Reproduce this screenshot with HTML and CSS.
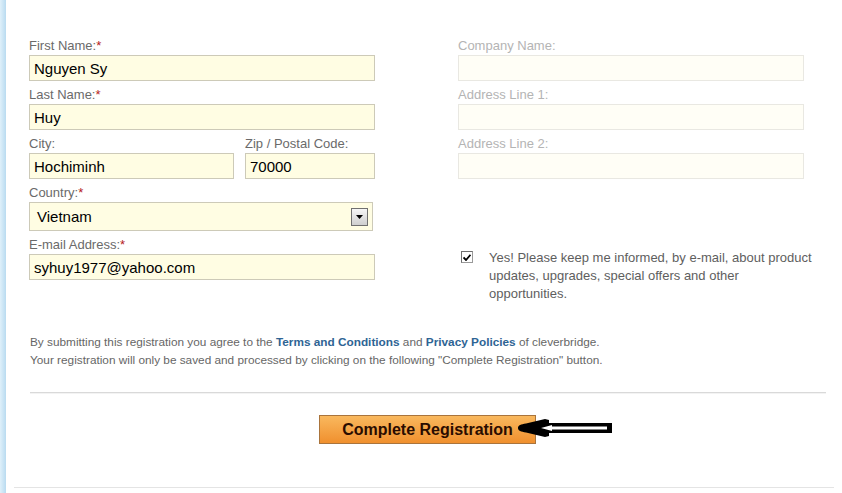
FILE: index.html
```
<!DOCTYPE html>
<html>
<head>
<meta charset="utf-8">
<link rel="stylesheet" href="styles.css">
</head>
<body>
<div class="page">
  <div class="strip"></div>
  <main class="content">
    <div class="form-grid">
      <div class="col">
        <div class="field">
          <label class="lbl">First Name:<span class="req">*</span></label>
          <input class="inp" type="text" value="Nguyen Sy">
        </div>
        <div class="field">
          <label class="lbl">Last Name:<span class="req">*</span></label>
          <input class="inp" type="text" value="Huy">
        </div>
        <div class="row2">
          <div class="field city">
            <label class="lbl">City:</label>
            <input class="inp" type="text" value="Hochiminh">
          </div>
          <div class="field zip">
            <label class="lbl">Zip / Postal Code:</label>
            <input class="inp" type="text" value="70000">
          </div>
        </div>
        <div class="field">
          <label class="lbl">Country:<span class="req">*</span></label>
          <div class="sel">
            <span class="sel-val">Vietnam</span>
            <span class="sel-btn"><svg width="7" height="4" viewBox="0 0 7 4"><path d="M0 0H7L3.5 4Z" fill="#000"/></svg></span>
          </div>
        </div>
        <div class="field">
          <label class="lbl">E-mail Address:<span class="req">*</span></label>
          <input class="inp" type="text" value="syhuy1977@yahoo.com">
        </div>
      </div>
      <div class="col col-opt">
        <div class="field">
          <label class="lbl">Company Name:</label>
          <input class="inp" type="text" value="">
        </div>
        <div class="field">
          <label class="lbl">Address Line 1:</label>
          <input class="inp" type="text" value="">
        </div>
        <div class="field">
          <label class="lbl">Address Line 2:</label>
          <input class="inp" type="text" value="">
        </div>
        <div class="newsletter">
          <span class="chk"><svg width="8" height="7" viewBox="0 0 8 7"><path d="M0.5 3.5L3 6L7.5 0.8" fill="none" stroke="#000" stroke-width="1.8"/></svg></span>
          <p class="news-text">Yes! Please keep me informed, by e-mail, about product updates, upgrades, special offers and other opportunities.</p>
        </div>
      </div>
    </div>
    <p class="terms">By submitting this registration you agree to the <a class="lnk">Terms and Conditions</a> and <a class="lnk">Privacy Policies</a> of cleverbridge.<br>Your registration will only be saved and processed by clicking on the following "Complete Registration" button.</p>
    <div class="sep"></div>
    <div class="actions">
      <div class="btn-wrap">
        <button class="btn" type="button">Complete Registration</button>
        <svg class="arrow" width="96" height="20" viewBox="0 0 96 20">
          <path d="M1 10C1 7 4 6.5 9 5.5L28 1L32 2L32 5L95 5L95 15L32 15L32 18L28 19L9 14.5C4 13.5 1 13 1 10Z" fill="#000"/>
          <path d="M24 10L35 7L35 8.5L90 8.5L90 11.5L35 11.5L35 13Z" fill="#fff"/>
        </svg>
      </div>
    </div>
    <div class="bottom-line"></div>
  </main>
</div>
</body>
</html>
```
FILE: styles.css
```
html, body {
  margin: 0;
  padding: 0;
  background: #fff;
  overflow: hidden;
}
body {
  font-family: "Liberation Sans", Arial, sans-serif;
}
.page {
  display: flex;
  min-height: 493px;
}
.strip {
  width: 6px;
  flex: none;
  background: linear-gradient(to right, #dff0fa, #b9dbf0);
}
.content {
  flex: 1;
  padding: 36px 16px 0 23px;
}
.form-grid {
  display: grid;
  grid-template-columns: 346px 1fr;
  column-gap: 83px;
}
.col {
  display: flex;
  flex-direction: column;
  gap: 4px;
}
.field {
  display: flex;
  flex-direction: column;
}
.lbl {
  display: block;
  font-size: 13px;
  line-height: 16px;
  color: #6a6a6a;
  padding-top: 2px;
  margin-bottom: 1px;
}
.req {
  color: #b51c1c;
}
.inp {
  box-sizing: border-box;
  width: 346px;
  height: 26px;
  margin: 0;
  border: 1px solid #cdcab8;
  background: #fffde3;
  font-family: "Liberation Sans", Arial, sans-serif;
  font-size: 15px;
  color: #000;
  padding: 1px 4px 0;
  outline: none;
}
.row2 {
  display: flex;
  gap: 11px;
}
.city .inp {
  width: 205px;
}
.zip .inp {
  width: 130px;
}
.sel {
  box-sizing: border-box;
  width: 344px;
  height: 29px;
  border: 1px solid #cdcab8;
  background: #fffde3;
  display: flex;
  align-items: center;
  justify-content: space-between;
  padding: 0 4px 0 7px;
}
.sel-val {
  font-size: 15px;
  color: #000;
}
.sel-btn {
  box-sizing: border-box;
  width: 17px;
  height: 18px;
  border: 1px solid #707070;
  background: linear-gradient(#f6f6f6, #cfcfcf);
  display: flex;
  align-items: center;
  justify-content: center;
}
.col-opt .lbl {
  color: #b4b4b4;
}
.col-opt .inp {
  border-color: #e9e8e2;
  background: #fffef6;
}
.newsletter {
  margin-top: 66px;
  display: flex;
  align-items: flex-start;
  gap: 16px;
}
.chk {
  box-sizing: border-box;
  flex: none;
  width: 12px;
  height: 12px;
  margin: 2px 0 0 3px;
  border: 1px solid #9a9a9a;
  border-top-color: #6f6f6f;
  border-left-color: #6f6f6f;
  background: #fff;
  display: flex;
  align-items: center;
  justify-content: center;
}
.news-text {
  margin: 0;
  width: 331px;
  font-size: 13px;
  line-height: 18px;
  color: #5e5e5e;
}
.terms {
  margin: 30px 0 0 1px;
  font-size: 11.8px;
  line-height: 18px;
  color: #666;
}
.lnk {
  color: #2e6494;
  font-weight: bold;
}
.sep {
  margin: 23px 0 0 1px;
  height: 1px;
  background: #d9d9d9;
  box-shadow: 0 1px 0 #f3f3f3;
}
.actions {
  margin-top: 22px;
  display: flex;
  justify-content: center;
}
.btn-wrap {
  position: relative;
}
.btn {
  box-sizing: border-box;
  width: 217px;
  height: 29px;
  margin: 0;
  padding: 0;
  border: 1px solid #a9743c;
  background: linear-gradient(#f9b85e, #f0902e);
  font-family: "Liberation Sans", Arial, sans-serif;
  font-size: 16px;
  font-weight: bold;
  color: #2a0c00;
  display: block;
}
.arrow {
  position: absolute;
  left: 198px;
  top: 3px;
}
.bottom-line {
  margin: 43px -8px 0 -15px;
  height: 1px;
  background: #e4e4e4;
}
```
